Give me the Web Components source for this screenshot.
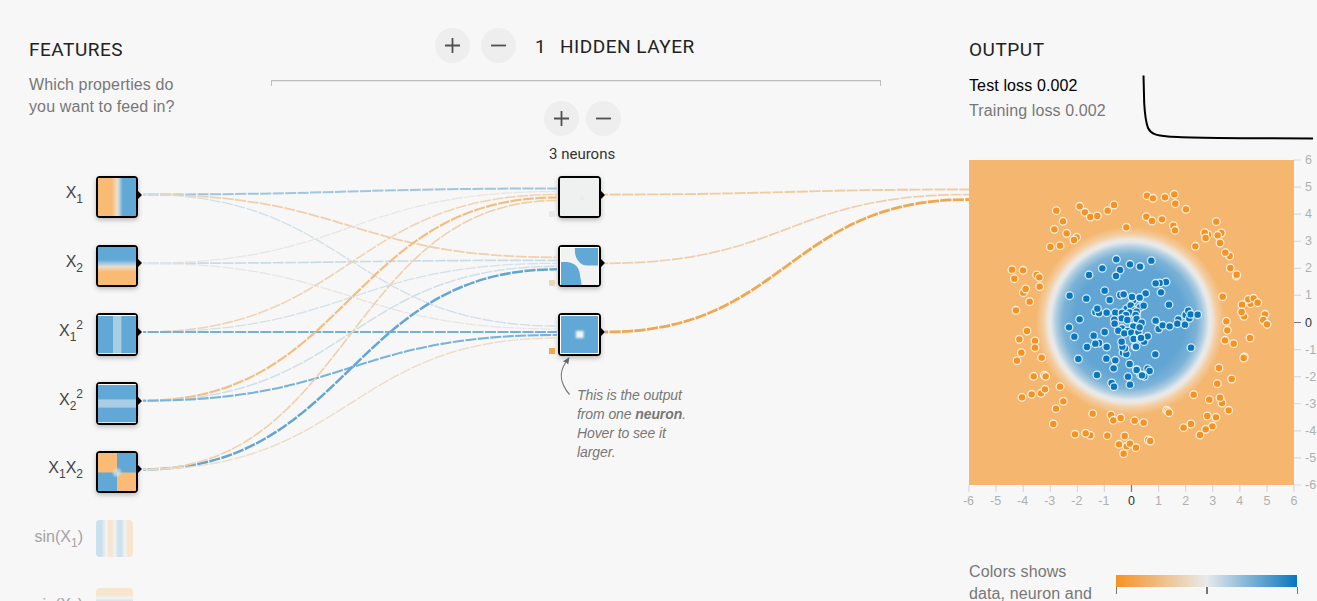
<!DOCTYPE html>
<html lang="en">
<head>
<meta charset="utf-8">
<title>Neural network playground</title>
<style>
html,body{margin:0;padding:0;background:#f7f7f7;overflow:hidden}
body{font-family:"Liberation Sans",Arial,sans-serif}
</style>
</head>
<body>
<nn-playground></nn-playground>
<script>
class Base extends HTMLElement {
  connectedCallback() {
    if (this.shadowRoot) return;
    this.attachShadow({mode: 'open'}).innerHTML = this.render();
  }
}

/* Round icon button */
customElements.define('round-button', class extends Base {
  render() {
    const plus = this.getAttribute('icon') === 'add';
    return `<style>
      :host{display:block;width:35px;height:35px;flex:none}
      button{display:flex;align-items:center;justify-content:center;width:35px;height:35px;border:0;padding:0;border-radius:50%;background:#eee}
      svg{display:block}
    </style>
    <button aria-label="${plus ? 'Add' : 'Remove'}"><svg width="15" height="15" viewBox="0 0 15 15" stroke="#505050" stroke-width="1.8"><path d="${plus ? 'M0 7.5H15M7.5 0V15' : 'M0 7.5H15'}"/></svg></button>`;
  }
});

/* Column title */
customElements.define('section-title', class extends Base {
  render() {
    return `<style>
      :host{display:block;font:400 19px/22px Roboto,sans-serif;letter-spacing:.52px;color:#222;white-space:pre}
    </style><slot></slot>`;
  }
});

const O = '#f9bb74', B = '#62a8d6', W = '#eff1f1';
const HEAT = {
  x1: `<rect width="38" height="38" fill="url(#h)"/>`,
  x2: `<rect width="38" height="38" fill="url(#v)"/>`,
  x1s: `<rect width="38" height="38" fill="${B}"/><rect x="15" y="-3" width="8.4" height="44" fill="#a8cde4" filter="url(#b)"/><path d="M0 .5H38M0 37.7H38" stroke="#fff"/>`,
  x2s: `<rect width="38" height="38" fill="${B}"/><rect x="-3" y="15" width="44" height="8" fill="#a8cde4" filter="url(#b)"/><path d="M0 .5H38M0 37.7H38" stroke="#fff"/>`,
  x1x2: `<g filter="url(#b)"><rect x="-4" y="-4" width="46" height="46" fill="${B}"/><path d="M-4-4H19V19.500H-4zM19 19.500H42V42H19z" fill="${O}"/></g><circle cx="19" cy="19.500" r="4" fill="#cfdde3" opacity=".85" filter="url(#b2)"/>`,
  n1: `<rect width="40" height="40" fill="${W}"/><circle cx="21.500" cy="20.500" r="2" fill="#e4e8ed" filter="url(#b2)"/>`,
  n2: `<rect width="40" height="40" fill="#f1f2f2"/><g fill="${B}" filter="url(#b)"><path d="M14.500-3V5C15 9 16 12 18 14C20 17 23 18.500 27 18.500H43V-3zM-3 15H7C12 15.500 15.500 17.500 17.500 21C19.500 25 19.500 29 20.500 34L21.500 43H-3z"/></g><path d="M0 .5H39M.5 0V39M37.500 0V39" stroke="#fff" fill="none"/>`,
  n3: `<rect width="40" height="40" fill="${B}"/><rect x="15.500" y="15.500" width="7.500" height="7" fill="#f5f5f5" filter="url(#b2)"/><rect x=".5" y=".5" width="37" height="37" fill="none" stroke="#fff"/>`,
  sin1: `<rect width="38" height="38" fill="url(#s)"/>`,
  sin2: `<rect width="38" height="38" fill="url(#sv)"/>`
};
const WAVE = `<stop offset=".14" stop-color="#c9e0ee"/><stop offset=".27" stop-color="#f5f3f0"/><stop offset=".34" stop-color="#f8e5cf"/><stop offset=".42" stop-color="#f8e6d2"/><stop offset=".5" stop-color="#f0f2f3"/><stop offset=".58" stop-color="#cfe2ee"/><stop offset=".66" stop-color="#c9e0ee"/><stop offset=".76" stop-color="#f1f2f2"/><stop offset=".84" stop-color="#f8e5cf"/>`;

/* Heat-map thumbnail of one node */
customElements.define('node-box', class extends Base {
  render() {
    const off = this.hasAttribute('inactive');
    return `<style>
      :host{display:block;position:relative;flex:none;box-sizing:border-box;width:${off ? 37 : this.getAttribute('w') || 42}px;height:${off ? 37 : this.getAttribute('h') || 42}px;${off ? '' : 'border:2px solid #000;box-shadow:0 2px 5px rgba(0,0,0,.25);'}border-radius:4px;overflow:visible}
      .map{display:block;width:100%;height:100%;border-radius:${off ? 4 : 1}px}
      .tip{position:absolute;left:100%;top:10.500px;width:7px;height:12px}
    </style>
    <svg class="map" viewBox="0 0 ${off ? '37 37' : '38 38'}" preserveAspectRatio="none"><defs>
      <filter id="b" x="-30%" y="-30%" width="160%" height="160%"><feGaussianBlur stdDeviation=".7"/></filter>
      <filter id="b2" x="-50%" y="-50%" width="200%" height="200%"><feGaussianBlur stdDeviation="1.1"/></filter>
      <linearGradient id="h"><stop offset=".36" stop-color="${O}"/><stop offset=".49" stop-color="#f1dac0"/><stop offset=".53" stop-color="#d5e0e6"/><stop offset=".65" stop-color="${B}"/></linearGradient>
      <linearGradient id="v" x2="0" y2="1"><stop offset=".34" stop-color="${B}"/><stop offset=".46" stop-color="#b6d0de"/><stop offset=".52" stop-color="#eddcc8"/><stop offset=".65" stop-color="${O}"/></linearGradient>
      <linearGradient id="s">${WAVE}</linearGradient>
      <linearGradient id="sv" x2="0" y2="1"><stop offset=".17" stop-color="#f8e5cf"/><stop offset=".27" stop-color="#f4f3f1"/><stop offset=".36" stop-color="#c9e0ee"/></linearGradient>
    </defs>${HEAT[this.getAttribute('map')]}</svg>
    ${off ? '' : '<svg class="tip" viewBox="0 0 7 12"><path d="M0 1.500H1.500L6 6L1.500 10.500H0z"/></svg>'}`;
  }
});

/* Feature label and its node */
customElements.define('feature-row', class extends Base {
  render() {
    const off = this.hasAttribute('inactive');
    const h = this.getAttribute('h');
    return `<style>
      :host{display:flex;box-sizing:border-box;height:68.700px;align-items:flex-start;${off ? 'padding-top:.2px' : ''}}
      .label{width:54px;margin-right:13px;flex:none;overflow:visible;display:block}
      text{font:16px "Liberation Sans",Arial,sans-serif;fill:${off ? '#a3a3a3' : '#444'};text-anchor:end}
    </style>
    <svg class="label" width="54" height="42"><text x="54" y="${h ? 22.6 : 22}">${this.getAttribute('label').replace(/_(\d)\^(\d)/g, '<tspan dy="5" font-size="12">$1</tspan><tspan dy="-12" font-size="12">$2</tspan>').replace(/_(\d)(.?)/g, '<tspan dy="5" font-size="12">$1</tspan><tspan dy="-5">$2</tspan>')}</text></svg>
    <node-box map="${this.getAttribute('map')}" ${h ? `h="${h}"` : ''} ${off ? 'inactive' : ''}></node-box>`;
  }
});

customElements.define('features-panel', class extends Base {
  render() {
    return `<style>
      :host{display:block;padding-top:39px}
      p{margin:13px 0 0;font:16px/22px "Liberation Sans",Arial,sans-serif;letter-spacing:.12px;color:#777}
      .list{padding-top:58px}
    </style>
    <section-title>FEATURES</section-title>
    <p>Which properties do<br>you want to feed in?</p>
    <div class="list">
      <feature-row label="X_1" map="x1"></feature-row>
      <feature-row label="X_2" map="x2"></feature-row>
      <feature-row label="X_1^2" map="x1s" h="43"></feature-row>
      <feature-row label="X_2^2" map="x2s" h="43"></feature-row>
      <feature-row label="X_1X_2" map="x1x2"></feature-row>
      <feature-row label="sin(X_1)" map="sin1" inactive></feature-row>
      <feature-row label="sin(X_2)" map="sin2" inactive></feature-row>
    </div>`;
  }
});

customElements.define('network-panel', class extends Base {
  render() {
    return `<style>
      :host{display:block;padding-top:28px}
      .top{display:flex;align-items:center;height:35px;padding-left:164px}
      .top round-button{margin-right:11px}
      .top section-title{padding-top:2px}
      .top .num{width:25px;padding-left:8px}
      .bracket{height:6px;box-sizing:border-box;margin-top:17px;border:solid #bdbdbd;border-width:1px 1px 0;box-shadow:inset 0 1px #e8e8e8}
      .ctl{display:flex;gap:7px;padding:15px 0 0 273px}
      .count{font:15px/18px Roboto,sans-serif;color:#333;padding:9px 0 0 278px}
      .nodes{padding:13px 0 0 287px}
      .cell{position:relative;height:68.700px}
      .bias{position:absolute;left:-9px;top:35px;width:6px;height:6px}
      .note{position:absolute;left:19px;top:73px;width:130px;font:italic 14px/19px "Liberation Sans",Arial,sans-serif;letter-spacing:-.1px;color:#777}
      .arrow{position:absolute;left:-3px;top:42px;overflow:visible}
    </style>
    <div class="top"><round-button icon="add"></round-button><round-button icon="remove"></round-button>
      <section-title class="num">1</section-title><section-title>HIDDEN LAYER</section-title></div>
    <div class="bracket"></div>
    <div class="ctl"><round-button icon="add"></round-button><round-button icon="remove"></round-button></div>
    <div class="count">3 neurons</div>
    <div class="nodes">
      <div class="cell"><node-box w="43" map="n1"></node-box><i class="bias" style="background:#e6e9e9"></i></div>
      <div class="cell"><node-box w="43" map="n2"></node-box><i class="bias" style="background:#f0d6b4"></i></div>
      <div class="cell"><node-box w="43" h="43" map="n3"></node-box><i class="bias" style="background:#f1a850"></i>
        <svg class="arrow" width="20" height="42"><path d="M14.500 39.500C4 27 4 17 11 7" fill="none" stroke="#777" stroke-width="1.200"/><path d="M14.500 2L7.800 6.500L11 7.300L13.200 9.500z" fill="#666"/></svg>
        <div class="note">This is the output<br>from one <b>neuron</b>.<br>Hover to see it<br>larger.</div></div>
    </div>`;
  }
});

/* Weighted connections between the nodes */
customElements.define('weight-links', class extends Base {
  render() {
    const fy = [194.5, 263.3, 332, 400.7, 469.4], ny = [194.5, 263.3, 332];
    const links = [
      [0,0,'#a0c6df',2],[0,1,'#efd0ab',1.8],[0,2,'#cfdfe8',1.3],
      [1,0,'#e8e4e0',1.2],[1,1,'#c8dce8',1.7],[1,2,'#e8e4e0',1.2],
      [2,0,'#efd4b4',1.6],[2,1,'#d3e1ea',1.3],[2,2,'#76b0d8',2.1],
      [3,0,'#f2bf83',2.2],[3,1,'#cfdfe8',1.5],[3,2,'#7ab2d8',2.1],
      [4,1,'#65a6d1',2.5],[4,0,'#efd0a8',1.6],[4,2,'#eddcc8',1.4]];
    const curve = (x1, y1, x2, y2, c, w) => {
      const m = (x1 + x2) / 2;
      return `<path d="M${x1} ${y1}C${m} ${y1} ${m} ${y2} ${x2} ${y2}" stroke="${c}" stroke-width="${w}"/>`;
    };
    return `<style>:host{display:block;pointer-events:none}svg{display:block}path{fill:none;stroke-dasharray:11.1 1.4;stroke-dashoffset:8}</style>
    <svg width="1317" height="601">${links.map(([f, n, c, w]) => curve(143, fy[f], 557, ny[n] + (f - 2) * 3, c, w)).join('')}
    ${curve(605, 194.5, 969, 189.5, '#efcda1', 1.9)}${curve(605, 263.3, 969, 194.5, '#efcfa9', 1.7)}${curve(605, 332, 969, 199.5, '#f0a850', 2.8)}</svg>`;
  }
});

/* Samples, digitised per quadrant at three units per pixel: offset, outer class, inner class */
const SAMPLES = [
  {at: [-4, -5],
   o: [274,167,294,199,268,223,305,235,335,247,327,255,256,276,285,272,344,154,360,172,376,186,397,183,428,167,447,150,484,217,141,344,148,371,174,346,215,360,223,367,224,395,175,413,182,402,194,440,153,466,186,528],
   i: [454,313,495,328,526,335,412,340,465,345,453,363,372,360,314,422,364,431,419,407,434,435,466,420,476,418,505,435,501,426,524,428,391,471,402,474,397,461,425,473,451,473,344,493,312,517,419,531,485,461,497,451,510,466,525,457,471,474,494,472,483,480,514,480,470,490,448,494,487,495,518,502,449,506,505,514,471,520,460,527,488,528,478,535,499,533,518,540]},
  {at: [166, -5],
   o: [36,122,54,130,90,127,118,118,121,146,153,163,34,185,51,198,81,193,115,212,120,226,244,200,219,239,209,233,212,249,181,274,259,234,248,241,255,264,284,303,271,293,286,339,304,363,305,359,263,425,321,449,347,446,340,433,356,430,368,443,327,484,320,471,390,478,385,495,396,508,274,499,277,526],
   i: [49,317,15,335,93,381,74,384,62,385,78,412,32,415,14,428,26,452,102,449,5,470,2,480,5,492,20,503,10,532,14,517,62,497,71,522,83,511,104,514,130,493,127,506,150,509,152,480,160,467,163,490,167,478,188,479]},
  {at: [-4, 155],
   o: [163,73,210,78,210,98,169,113,156,137,230,128,206,184,238,181,242,184,285,215,171,247,200,238,228,235,240,223,295,259,273,281,265,327,330,358,376,361,362,355,427,362,383,296,438,300,445,316,467,309,509,317,479,363,462,388,485,394,495,386,476,416,513,398],
   i: [328,65,386,62,366,96,402,84,391,86,425,96,340,132,396,180,424,131,451,136,446,160,440,204,447,215,495,209,489,185,494,147,515,164,474,113,484,117,480,100,472,95,470,80,510,95,506,72,526,70,527,180]},
  {at: [166, 155],
   o: [270,76,296,86,345,69,328,126,326,129,252,159,290,192,247,206,176,239,223,254,261,264,255,248,281,286,217,303,243,307,232,334,212,343,195,360,168,327,146,338,95,286,99,289,102,293,26,323,40,375,46,378],
   i: [27,80,38,64,18,69,3,95,61,118,168,98,5,165,38,161,44,168,28,184,21,181]}
];
const MARKS = [-6,-5,-4,-3,-2,-1,0,1,2,3,4,5,6];

customElements.define('output-map', class extends Base {
  render() {
    const dots = (list, c) => {
      let s = '';
      for (let k = 0; k < list.length; k += 2) s += `<circle cx="${list[k]}" cy="${list[k + 1]}" r="11.500" fill="${c}"/>`;
      return s;
    };
    return `<style>
      :host{display:block}
      svg{display:block;overflow:visible}
      circle{stroke:#fff;stroke-opacity:.82;stroke-width:3.800px}
      text{font:12.500px "Liberation Sans",Arial,sans-serif;fill:#b0b0b0}
      .x{text-anchor:middle}
      .zero{fill:#333}
    </style>
    <svg width="348" height="350"><defs><radialGradient id="g" gradientUnits="userSpaceOnUse" cx="161" cy="161" r="110">
      <stop offset=".5" stop-color="#60a5d3"/><stop offset=".61" stop-color="#7bb2d7"/><stop offset=".67" stop-color="#abcce0"/><stop offset=".72" stop-color="#e6e9eb"/><stop offset=".745" stop-color="#eee6dd"/><stop offset=".79" stop-color="#f3cda1"/><stop offset=".86" stop-color="#f5b66f"/></radialGradient></defs>
    <rect width="325" height="325" fill="url(#g)"/>
    ${SAMPLES.map(q => `<g transform="translate(${q.at}) scale(.33333)">${dots(q.o, '#f59322')}${dots(q.i, '#0877bd')}</g>`).join('')}
    ${MARKS.map(v => {
      const p = 162.5 + v * 27.083, q = 325 - p, z = v === 0;
      return `<path d="M${p} 325V332M325 ${q}H332" stroke="${z ? '#777' : '#d9d9d9'}" stroke-width="1.200"/><text class="x ${z ? 'zero' : ''}" x="${p - (v < 0 ? .5 : 0)}" y="344.6">${v}</text><text class="${z ? 'zero' : ''}" x="336" y="${q + 4}">${v}</text>`;
    }).join('')}</svg>`;
  }
});

customElements.define('loss-chart', class extends Base {
  render() {
    return `<style>:host{display:block}svg{display:block}</style>
    <svg width="175" height="70" fill="none" stroke="#000" stroke-width="2"><path d="M4.500 5.500L5.200 33C5.800 44 6.500 51 9 58C12 64 17 65.500 29 66.500C50 68 90 68.300 174 68.500"/></svg>`;
  }
});

customElements.define('color-legend', class extends Base {
  render() {
    return `<style>
      :host{display:flex;font:16px/22px "Liberation Sans",Arial,sans-serif;letter-spacing:.12px;color:#777}
      .text{width:147px;white-space:nowrap}
      .bar{width:181px;margin-top:14px}
      .fill{height:12px;background:linear-gradient(90deg,#f59322,#e8eaeb 50%,#0877bd)}
      .ticks{display:flex;justify-content:space-between;height:7px;margin:0 -.5px}
      i{width:1px;background:#777}.mid{width:2px}
    </style>
    <div class="text">Colors shows<br>data, neuron and</div>
    <div class="bar"><div class="fill"></div><div class="ticks"><i></i><i class="mid"></i><i></i></div></div>`;
  }
});

customElements.define('output-panel', class extends Base {
  render() {
    return `<style>
      :host{display:block;padding-top:39px}
      .stats{display:flex;height:70px;padding-top:9px;margin-bottom:20px}
      .loss{width:170px;flex:none;font:16px/25px "Liberation Sans",Arial,sans-serif;letter-spacing:.12px;color:#000;padding-top:3px}
      .train{color:#777}
      color-legend{margin-top:51px}
    </style>
    <section-title>OUTPUT</section-title>
    <div class="stats"><div class="loss"><div>Test loss 0.002</div><div class="train">Training loss 0.002</div></div><loss-chart></loss-chart></div>
    <output-map></output-map>
    <color-legend></color-legend>`;
  }
});

customElements.define('nn-playground', class extends Base {
  render() {
    return `<style>
      :host{display:grid;position:relative;box-sizing:border-box;width:1317px;height:601px;overflow:hidden;padding-left:29px;grid-template-columns:242px 610px 348px;background:#f7f7f7}
      output-panel{margin-left:88px;width:348px}
      weight-links{position:absolute;left:0;top:0}
    </style>
    <features-panel></features-panel><network-panel></network-panel><output-panel></output-panel><weight-links></weight-links>`;
  }
});
</script>
</body>
</html>
